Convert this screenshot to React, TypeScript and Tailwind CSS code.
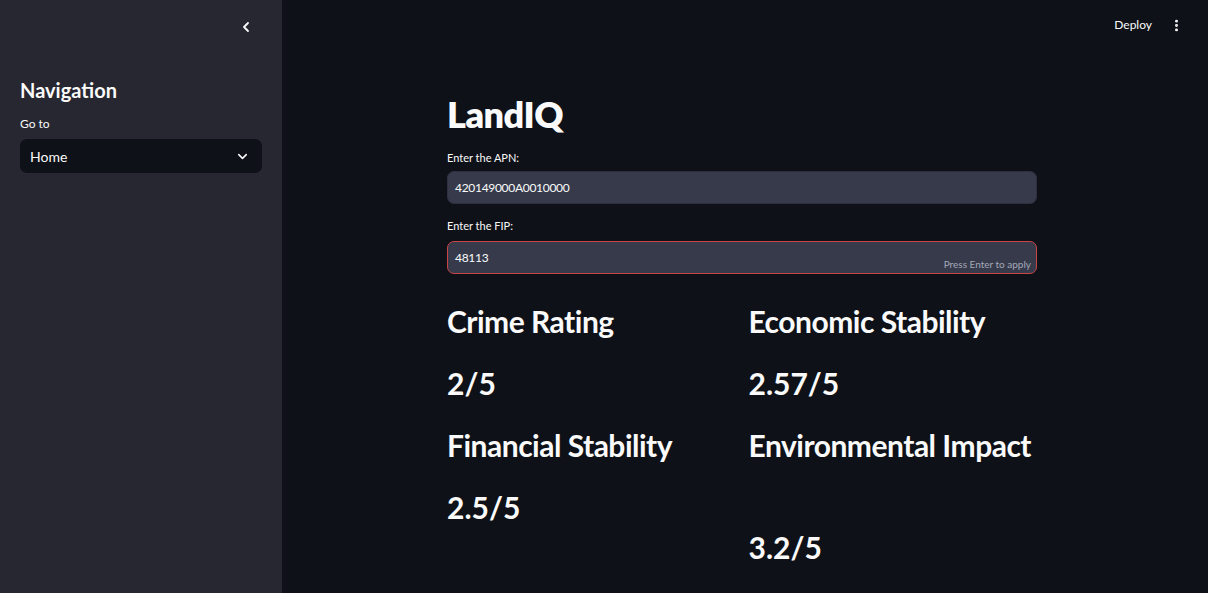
import { ChevronLeft, ChevronDown, EllipsisVertical } from "lucide-react";

const font = { fontFamily: "Lato, 'Noto Sans', sans-serif" };

function Metric({ title, value, extra }: { title: string; value: string; extra?: boolean }) {
  return (
    <div className="flex flex-col">
      <h2 className="whitespace-nowrap text-[30px] font-bold leading-[40px] tracking-[-0.5px] text-[#fafafa]">{title}</h2>
      <div
        className={
          extra
            ? "mt-[62px] text-[30px] font-bold leading-[40px] text-[#fafafa]"
            : "mt-[22px] text-[30px] font-bold leading-[40px] text-[#fafafa]"
        }
      >
        {value}
      </div>
    </div>
  );
}

export default function App() {
  return (
    <div className="flex h-[593px] w-[1208px] overflow-hidden bg-[#0e1117] text-[#fafafa]" style={font}>
      <aside className="flex w-[282px] shrink-0 flex-col bg-[#262730] px-5">
        <div className="flex h-[54px] shrink-0 items-center justify-end pr-[8px]">
          <ChevronLeft size={16} strokeWidth={2.75} />
        </div>
        <h2 className="mt-[24px] shrink-0 text-[20px] font-bold leading-[24px]">Navigation</h2>
        <label className="mt-[15px] shrink-0 text-[12px] leading-[14px]">Go to</label>
        <div className="mt-[8px] flex h-[34px] shrink-0 items-center justify-between rounded-[7px] bg-[#0e1117] pl-[10px] pr-[12px]">
          <span className="text-[14px]">Home</span>
          <ChevronDown size={15} strokeWidth={2.5} />
        </div>
      </aside>

      <main className="flex min-h-0 flex-1 flex-col">
        <header className="flex h-[50px] shrink-0 items-center justify-end gap-[17px] pr-[24px]">
          <span className="text-[12px]">Deploy</span>
          <EllipsisVertical size={15} strokeWidth={2.75} />
        </header>

        <div className="flex w-[590px] shrink-0 flex-col" style={{ marginLeft: 165 }}>
          <h1 className="mt-[42px] text-[36px] font-extrabold leading-[44px] tracking-[-0.5px]">LandIQ</h1>

          <label className="mt-[15px] text-[11px] leading-[14px]">Enter the APN:</label>
          <div className="mt-[6px] flex h-[33px] items-center rounded-[7px] border border-[#2e3040] bg-[#373a4b] px-[7px]">
            <span className="text-[12px] tracking-[-0.3px]">420149000A0010000</span>
          </div>

          <label className="mt-[15px] text-[11px] leading-[14px]">Enter the FIP:</label>
          <div className="relative mt-[8px] flex h-[33px] items-center rounded-[7px] border border-[#c94545] bg-[#373a4b] px-[7px]">
            <span className="text-[12px] tracking-[-0.3px]">48113</span>
            <span className="absolute bottom-[1px] right-[5px] text-[10px] text-[#a3a8b8]">Press Enter to apply</span>
          </div>

          <div className="mt-[27px] grid grid-cols-2 gap-x-[13px] gap-y-[22px]">
            <Metric title="Crime Rating" value="2/5" />
            <Metric title="Economic Stability" value="2.57/5" />
            <Metric title="Financial Stability" value="2.5/5" />
            <Metric title="Environmental Impact" value="3.2/5" extra />
          </div>
        </div>
      </main>
    </div>
  );
}
